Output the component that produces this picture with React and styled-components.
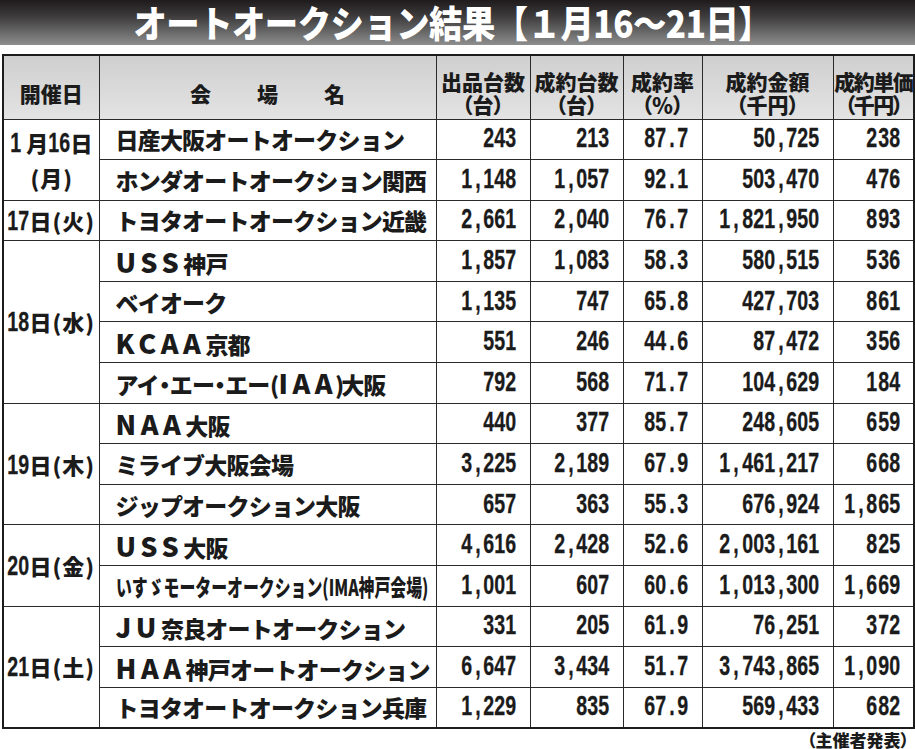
import React from "react";
import styled, { createGlobalStyle } from "styled-components";

const GlobalStyle = createGlobalStyle`
  body {
    margin: 0;
    background: #fff;
    font-family: "Noto Sans CJK JP", "Noto Sans", sans-serif;
    color: #1b1b1b;
  }
`;

const Page = styled.div`
  width: 915px;
`;

const TitleBar = styled.div`
  height: 45px;
  background: linear-gradient(to bottom, #1f1b1c 0%, #3c3a3b 35%, #6d6d6d 75%, #8e8e8e 100%);
  display: flex;
  justify-content: center;
  align-items: center;
  padding-right: 10px;
  overflow: hidden;
`;

const Title = styled.h1`
  margin: 0;
  color: #fff;
  font-size: 37px;
  font-weight: 900;
  line-height: 45px;
  letter-spacing: -0.5px;
  white-space: nowrap;
  transform: scaleX(0.9);
`;

const Table = styled.table`
  margin: 9px 0 0 2px;
  width: 911px;
  border-collapse: collapse;
  table-layout: fixed;
  border: 2px solid #1c1c1c;
`;

const HeadRow = styled.tr`
  height: 64px;
`;

const Row = styled.tr`
  height: 40.6px;
`;

const Th = styled.th`
  border: 1px solid #2a2a2a;
  background: linear-gradient(to bottom, #cfcfcf, #e3e3e3);
  font-size: 21px;
  font-weight: 900;
  line-height: 23px;
  padding: 12px 0 0;
  white-space: nowrap;
  letter-spacing: ${(p) => (p.$tight ? "-1.5px" : "0")};
  font-feature-settings: "palt";
`;

const SpacedHead = styled.span`
  letter-spacing: 46px;
  padding-left: 46px;
  font-feature-settings: normal;
`;

const DateCell = styled.td`
  border: 1px solid #2a2a2a;
  text-align: center;
  font-size: 22px;
  font-weight: 900;
  line-height: ${(p) => (p.$twoLine ? "35px" : "24px")};
  padding: 0;
  white-space: nowrap;
`;

const NameCell = styled.td`
  border: 1px solid #2a2a2a;
  padding: 0 0 0 16px;
  font-size: 23px;
  font-weight: 900;
  line-height: 24px;
  letter-spacing: -0.8px;
  white-space: nowrap;
  overflow: hidden;
`;

const Latin = styled.span`
  font-size: 27px;
  line-height: 1;
  letter-spacing: 4.5px;
`;

const Slim = styled.span`
  display: inline-flex;
  justify-content: center;
  width: ${(p) => p.$w || 11}px;
`;

const Squeeze = styled.span`
  display: inline-block;
  transform: scaleX(0.69);
  transform-origin: left center;
  letter-spacing: 0;
`;

const NumCell = styled.td`
  border: 1px solid #2a2a2a;
  text-align: right;
  padding: 0 13px 0 0;
  white-space: nowrap;
  line-height: 24px;
`;

const Ch = styled.span`
  display: inline-flex;
  justify-content: center;
  width: 11.1px;
  font-family: "Liberation Sans", Arial, sans-serif;
  font-weight: 700;
  font-size: 28px;
  line-height: 24px;
`;

const Glyph = styled.span`
  display: inline-block;
  transform: scaleX(0.7);
  -webkit-text-stroke: 0.3px currentColor;
`;

const Paren = styled.span`
  display: inline-block;
  margin: 0 1px;
`;

const Note = styled.div`
  text-align: right;
  padding-right: 6px;
  margin-top: 1px;
  font-size: 17px;
  font-weight: 900;
  line-height: 19px;
  font-feature-settings: "palt";
`;

const Figures = ({ text }) =>
  text.split("").map((c, i) => (
    <Ch key={i}>
      <Glyph>{c}</Glyph>
    </Ch>
  ));

const DayLabel = ({ day, week }) => (
  <>
    <Figures text={day} />日<Paren>(</Paren>
    {week}
    <Paren>)</Paren>
  </>
);

const groups = [
  {
    date: (
      <>
        <Figures text="1" />
        {" "}月<Figures text="16" />日<br />
        <Paren>(</Paren>月<Paren>)</Paren>
      </>
    ),
    twoLine: true,
    rows: [
      ["日産大阪オートオークション", "243", "213", "87.7", "50,725", "238"],
      ["ホンダオートオークション関西", "1,148", "1,057", "92.1", "503,470", "476"],
    ],
  },
  {
    date: <DayLabel day="17" week="火" />,
    rows: [["トヨタオートオークション近畿", "2,661", "2,040", "76.7", "1,821,950", "893"]],
  },
  {
    date: <DayLabel day="18" week="水" />,
    rows: [
      [<><Latin>USS</Latin>神戸</>, "1,857", "1,083", "58.3", "580,515", "536"],
      ["ベイオーク", "1,135", "747", "65.8", "427,703", "861"],
      [<><Latin>KCAA</Latin>京都</>, "551", "246", "44.6", "87,472", "356"],
      [
        <>
          アイ<Slim>・</Slim>エー<Slim>・</Slim>エー<Slim $w={9}>(</Slim>
          <Latin>IAA</Latin>
          <Slim $w={4}>)</Slim>大阪
        </>,
        "792", "568", "71.7", "104,629", "184",
      ],
    ],
  },
  {
    date: <DayLabel day="19" week="木" />,
    rows: [
      [<><Latin>NAA</Latin>大阪</>, "440", "377", "85.7", "248,605", "659"],
      ["ミライブ大阪会場", "3,225", "2,189", "67.9", "1,461,217", "668"],
      ["ジップオークション大阪", "657", "363", "55.3", "676,924", "1,865"],
    ],
  },
  {
    date: <DayLabel day="20" week="金" />,
    rows: [
      [<><Latin>USS</Latin>大阪</>, "4,616", "2,428", "52.6", "2,003,161", "825"],
      [<Squeeze>いすゞモーターオークション(IMA神戸会場)</Squeeze>, "1,001", "607", "60.6", "1,013,300", "1,669"],
    ],
  },
  {
    date: <DayLabel day="21" week="土" />,
    rows: [
      [<><Latin>JU</Latin>奈良オートオークション</>, "331", "205", "61.9", "76,251", "372"],
      [<><Latin>HAA</Latin>神戸オートオークション</>, "6,647", "3,434", "51.7", "3,743,865", "1,090"],
      ["トヨタオートオークション兵庫", "1,229", "835", "67.9", "569,433", "682"],
    ],
  },
];

const App = () => (
  <Page>
    <GlobalStyle />
    <TitleBar>
      <Title>オートオークション結果【１月16～21日】</Title>
    </TitleBar>
    <Table>
      <colgroup>
        <col style={{ width: 96 }} />
        <col style={{ width: 337 }} />
        <col style={{ width: 94 }} />
        <col style={{ width: 93 }} />
        <col style={{ width: 79 }} />
        <col style={{ width: 131 }} />
        <col style={{ width: 81 }} />
      </colgroup>
      <thead>
        <HeadRow>
          <Th>開催日</Th>
          <Th>
            <SpacedHead>会場名</SpacedHead>
          </Th>
          <Th>
            出品台数
            <br />（台）
          </Th>
          <Th>
            成約台数
            <br />（台）
          </Th>
          <Th>
            成約率
            <br />（％）
          </Th>
          <Th>
            成約金額
            <br />（千円）
          </Th>
          <Th $tight>
            成約単価
            <br />（千円）
          </Th>
        </HeadRow>
      </thead>
      <tbody>
        {groups.map((g, gi) =>
          g.rows.map((r, ri) => (
            <Row key={`${gi}-${ri}`}>
              {ri === 0 && (
                <DateCell rowSpan={g.rows.length} $twoLine={g.twoLine}>
                  {g.date}
                </DateCell>
              )}
              <NameCell>{r[0]}</NameCell>
              {r.slice(1).map((v, vi) => (
                <NumCell key={vi}>
                  <Figures text={v} />
                </NumCell>
              ))}
            </Row>
          ))
        )}
      </tbody>
    </Table>
    <Note>（主催者発表）</Note>
  </Page>
);

export default App;
